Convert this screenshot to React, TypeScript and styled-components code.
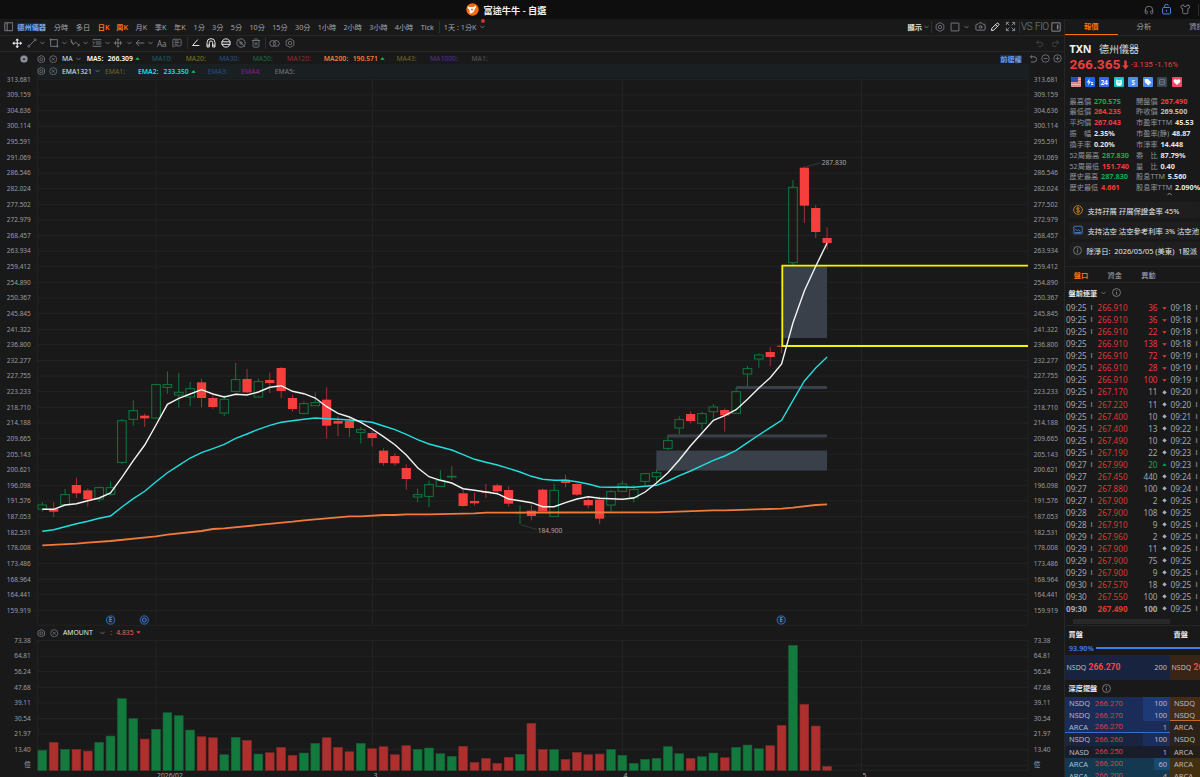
import React from "react";
import styled, { createGlobalStyle, css } from "styled-components";
import { Camera, Expand, Headphones, MessageSquareText, Redo2, Shirt, Trash2, Undo2 } from "lucide-react";

/* ---------- palette ---------- */
const C = {
  bg: "#191919",
  line: "#252525",
  text: "#a3a8b0",
  icon: "#6f747c",
  white: "#e4e6ea",
  red: "#f23c3c",
  green: "#0fae4e",
  orange: "#f5730f",
  cyan: "#22dfdf",
};

const Global = createGlobalStyle`
  html, body { margin: 0; padding: 0; background: ${C.bg}; }
  * { box-sizing: border-box; }
  body {
    font-family: "Noto Sans", "Noto Sans CJK TC", sans-serif;
    font-size: 7.2px;
    color: ${C.text};
    overflow: hidden;
  }
  svg { display: block; flex: none; }
`;

/* ---------- shell ---------- */
const Window = styled.div`
  width: 1200px;
  height: 777px;
  display: flex;
  flex-direction: column;
  overflow: hidden;
  background: ${C.bg};
  white-space: nowrap;
`;
const TitleBar = styled.header`
  flex: 0 0 19px;
  display: flex;
  align-items: center;
  background: #0e0e0e;
  padding-left: 466px;
`;
const Title = styled.div`
  width: 660px;
  padding-left: 4.5px;
  color: #f0f0f0;
  font-size: 9.2px;
  font-weight: 600;
`;
const TitleIcons = styled.div`
  display: flex;
  align-items: center;
  gap: 7.5px;
  margin-left: 4.5px;
`;
const Body = styled.div`
  flex: 1;
  min-height: 0;
  display: flex;
`;
const ChartSide = styled.main`
  flex: 0 0 1064px;
  display: flex;
  flex-direction: column;
  min-height: 0;
  overflow: hidden;
`;
const Bar = styled.div<{ $h: number; $line?: boolean }>`
  flex: 0 0 ${(p) => p.$h}px;
  display: flex;
  align-items: center;
  ${(p) => p.$line && css`border-bottom: 1px solid ${C.line};`}
`;
const Cell = styled.span<{ $w: number; $color?: string; $bold?: boolean; $center?: boolean }>`
  flex: 0 0 ${(p) => p.$w}px;
  width: ${(p) => p.$w}px;
  display: flex;
  align-items: center;
  justify-content: ${(p) => (p.$center ? "center" : "flex-start")};
  color: ${(p) => p.$color ?? C.text};
  font-weight: ${(p) => (p.$bold ? 600 : 400)};
`;
const Divider = styled.i`
  width: 1px;
  height: 12px;
  background: #2d2d2d;
`;
const Spacer = styled.div`
  flex: 1;
`;
const CompareText = styled.span<{ $w: number }>`
  flex: 0 0 ${(p) => p.$w}px;
  font-family: Roboto, sans-serif;
  font-weight: 300;
  font-size: 10px;
  letter-spacing: -0.5px;
  color: #7f838a;
`;
const DotWrap = styled.span`
  position: relative;
  display: flex;
`;
const RedDot = styled.i`
  position: absolute;
  left: 1px;
  top: -5.5px;
  width: 4px;
  height: 4px;
  border-radius: 50%;
  background: #c8342f;
`;

/* ---------- icons ---------- */
type G = { c?: string; s?: number; w?: number };
const Svg = ({ c = C.icon, s = 10, w = 1, children }: G & { children: React.ReactNode }) => (
  <svg width={s} height={s} viewBox="0 0 12 12" fill="none" stroke={c} strokeWidth={w * (12 / s)} strokeLinejoin="round">
    {children}
  </svg>
);
const Chevron = ({ c = C.icon }: G) => (
  <svg width="5" height="4" viewBox="0 0 5 4" fill="none" stroke={c} strokeWidth="0.9">
    <path d="M0.4 0.8 L2.5 3 L4.6 0.8" />
  </svg>
);
const HexGear = (p: G) => (
  <Svg w={0.9} {...p}>
    <path d="M6 0.7 L10.6 3.3 V8.7 L6 11.3 L1.4 8.7 V3.3 Z" />
    <circle cx="6" cy="6" r="2" />
  </Svg>
);
const CircleX = (p: G) => (
  <Svg w={0.8} {...p}>
    <circle cx="6" cy="6" r="5" />
    <path d="M4 4 L8 8 M8 4 L4 8" />
  </Svg>
);
const CirclePM = ({ plus, ...p }: G & { plus?: boolean }) => (
  <Svg w={0.9} {...p}>
    <circle cx="6" cy="6" r="5" />
    <path d={plus ? "M3.5 6 H8.5 M6 3.5 V8.5" : "M3.5 6 H8.5"} />
  </Svg>
);
const Info = () => (
  <Svg s={9} w={0.8} c="#868b93">
    <circle cx="6" cy="6" r="5.3" />
    <path d="M6 5 V9 M6 2.8 V4" />
  </Svg>
);
const PanelIcon = ({ right, ...p }: G & { right?: boolean }) => (
  <Svg w={0.9} {...p}>
    <rect x="1" y="1" width="10" height="10" />
    {right ? <rect x="7.5" y="3.4" width="1" height="5.2" fill={p.c} strokeWidth="0.6" /> : <path d="M4 1 V11" />}
  </Svg>
);
const Tri = ({ dir, c }: { dir: "up" | "down" | "flat"; c: string }) => (
  <svg width="5" height="5" viewBox="0 0 5 5" fill={c}>
    {dir === "up" && <path d="M0.3 3.8 L2.5 1.3 L4.7 3.8 Z" />}
    {dir === "down" && <path d="M0.3 1.3 L2.5 3.7 L4.7 1.3 Z" />}
    {dir === "flat" && <path d="M2.5 0.2 L4.7 2.4 L2.5 4.6 L0.3 2.4 Z" />}
  </svg>
);
const Logo = () => (
  <svg width="13" height="13" viewBox="0 0 13 13">
    <circle cx="6.5" cy="6.5" r="6.2" fill="#f9690e" />
    <path d="M1.6 3.2 C3 4.4 4.5 3.6 6.4 4 C8.2 4.4 8.8 3.2 9.8 2.6 C10.2 4.6 9.6 5.8 8.6 6.6 C8 9 6.8 10.6 4 10.4 C2.8 9.6 4 8.4 3.6 7 C2.4 6 1.4 5 1.6 3.2 Z" fill="#fff" />
    <circle cx="6" cy="6.6" r="1" fill="#f9690e" />
  </svg>
);
const Lock = () => (
  <Svg c="#4f86dc" s={11} w={1}>
    <rect x="1.8" y="3.8" width="8.6" height="7" rx="1" />
    <path d="M4 3.6 V2.6 a2 2 0 0 1 4 -0.6 M6 6.4 V8.4" />
  </Svg>
);

/* ---------- period row ---------- */
const periods: [string, number, string?][] = [
  ["分時", 22], ["多日", 22], ["日K", 18.5, C.orange], ["周K", 19.2, C.orange], ["月K", 19.3], ["季K", 19.3],
  ["年K", 19.5], ["1分", 18.5], ["3分", 18.7], ["5分", 18.7], ["10分", 22.8], ["15分", 22.8], ["30分", 22.7],
  ["1小時", 25.7], ["2小時", 25.9], ["3小時", 25.5], ["4小時", 26], ["Tick", 18.5],
];
const StockName = styled.b`
  color: #7ba6ee;
  font-weight: 600;
  background: #1d2a42;
  line-height: 8px;
`;

const PeriodBar = () => (
  <Bar $h={16.5} $line>
    <Cell $w={17.3} $center><PanelIcon c="#858a92" s={9.5} /></Cell>
    <Cell $w={36.5}><StockName>德州儀器</StockName></Cell>
    {periods.map(([t, w, c]) => (
      <Cell key={t} $w={w} $color={c} $bold={!!c}>{t}</Cell>
    ))}
    <Cell $w={4.5}><Divider /></Cell>
    <Cell $w={36.5}>1天 : 1分K</Cell>
    <DotWrap><Chevron /><RedDot /></DotWrap>
    <Spacer />
    <Cell $w={16.5} $color={C.white} $bold>顯示</Cell>
    <Cell $w={7}><Chevron /></Cell>
    <Cell $w={3}><Divider /></Cell>
    <Cell $w={11} $center><HexGear /></Cell>
    <Cell $w={19} $center><Svg s={10}><rect x="1.3" y="1.3" width="9.4" height="9.4" /></Svg></Cell>
    <Cell $w={9}><Chevron /></Cell>
    <Cell $w={14} $center><Camera size={11} color="#858a92" strokeWidth={1.9} /></Cell>
    <Cell $w={15.5} $center>
      <Svg c="#e8eaee" s={10} w={1}>
        <path d="M1.8 10.2 L2.2 7.6 L8 1.8 a1.5 1.5 0 0 1 2.2 2.2 L4.4 9.8 Z M6.6 3.2 L8.8 5.4" />
      </Svg>
    </Cell>
    <Cell $w={16.5} $center><Expand size={11} color="#858a92" strokeWidth={2} /></Cell>
    <Cell $w={2}><Divider /></Cell>
    <CompareText $w={14}>VS</CompareText>
    <CompareText $w={14}>FIO</CompareText>
    <Cell $w={13.5} $center><PanelIcon right c="#8e929a" s={10} /></Cell>
    <Cell $w={1.5} />
  </Bar>
);

/* ---------- drawing tools row ---------- */
const drawTools: React.ReactNode[] = [
  <Svg><circle cx="2.2" cy="9.8" r="1.2" /><circle cx="9.8" cy="2.2" r="1.2" /><path d="M3 9 L9 3" /></Svg>,
  <Svg><rect x="2" y="2" width="8" height="8" /><path d="M0.6 2 H3.4 M2 0.6 V3.4 M8.6 10 H11.4 M10 8.6 V11.4" /></Svg>,
  <Svg><path d="M1 1.5 L3.6 7.8 L7 5 L11 9 M1 4 L3.6 7.8 M9.2 9.8 L11 9 L10.8 7" /></Svg>,
  <Svg><path d="M0.8 2 H11.2 M4.5 4.8 H11.2 M4.5 7.2 H11.2 M0.8 10 H11.2 M0.8 4 L2.8 6 L0.8 8" /></Svg>,
  <Svg><path d="M6 0.8 V11.2 M0.8 6 H11.2 M3 3.8 V8.2 M9 3.8 V8.2 M4.4 2 H7.6 M4.4 10 H7.6" /></Svg>,
  <Svg><path d="M11.2 6 H1.4 M5 2.4 L1.4 6 L5 9.6" /></Svg>,
];
const ToolText = styled.span`
  font-size: 8px;
  color: #858a92;
`;
const DrawBar = () => (
  <Bar $h={16} $line>
    <Cell $w={10} />
    <Cell $w={14} $center>
      <Svg c="#eceef2" s={10.5} w={1.1}>
        <path d="M6 1 V11 M1 6 H11" />
        <path d="M4.4 2.6 L6 0.8 L7.6 2.6 Z M4.4 9.4 L6 11.2 L7.6 9.4 Z M2.6 4.4 L0.8 6 L2.6 7.6 Z M9.4 4.4 L11.2 6 L9.4 7.6 Z" fill="#eceef2" strokeWidth="0.5" />
      </Svg>
    </Cell>
    <Cell $w={1.5} />
    {drawTools.map((node, i) => (
      <React.Fragment key={i}>
        <Cell $w={12.9} $center>{node}</Cell>
        <Cell $w={8.7} $center><Chevron /></Cell>
      </React.Fragment>
    ))}
    <Cell $w={13.6} $center><ToolText>Aa</ToolText></Cell>
    <Cell $w={17} $center><MessageSquareText size={10} color={C.icon} strokeWidth={2.2} /></Cell>
    <Cell $w={3.5} $center><Divider /></Cell>
    <Cell $w={14} $center><Svg c="#e4e6ea" s={9.5} w={1}><path d="M8.5 2 L2 9.5 H10.5" /></Svg></Cell>
    <Cell $w={15.5} $center><Svg c="#e4e6ea" s={10} w={1}><path d="M1.2 10.8 V5.5 a4.8 4.8 0 0 1 9.6 0 V10.8 H8 V5.6 a2 2 0 0 0 -4 0 V10.8 Z M1.2 8.6 H4 M8 8.6 H10.8" /></Svg></Cell>
    <Cell $w={15} $center><Svg c="#e4e6ea" s={10} w={1}><circle cx="6" cy="6" r="5" /><path d="M0.8 4.6 H11.2 M0.8 7.6 H11.2" /></Svg></Cell>
    <Cell $w={15} $center><Svg s={10}><circle cx="6" cy="6" r="5" /><circle cx="6" cy="6" r="1.4" /><path d="M2 1.5 L10.5 10.5" /></Svg></Cell>
    <Cell $w={15} $center><Trash2 size={10} color={C.icon} strokeWidth={2.2} /></Cell>
    <Cell $w={4} $center><Divider /></Cell>
    <Cell $w={14.5} $center><Svg s={11}><circle cx="4" cy="6" r="3.2" /><circle cx="8" cy="6" r="3.2" /></Svg></Cell>
    <Cell $w={15} $center><HexGear /></Cell>
    <Spacer />
    <Cell $w={15.5} $center><Undo2 size={9} color="#4a4e54" strokeWidth={2} /></Cell>
    <Cell $w={17} $center><Redo2 size={9} color="#4a4e54" strokeWidth={2} /></Cell>
  </Bar>
);

/* ---------- indicator legends ---------- */
const Legend = styled(Bar)<{ $top?: number }>`
  padding-top: ${(p) => p.$top ?? 0}px;
  font-size: 6.8px;
`;
const EmaLegend = styled.div`
  position: absolute;
  left: 0;
  right: 0;
  top: 0;
  height: 14px;
  display: flex;
  align-items: center;
  background: #1a1f21;
  font-size: 6.8px;
`;
const AdjustTag = styled.b`
  font-size: 7.2px;
  font-weight: 600;
  line-height: 8px;
  color: #6f9ce8;
  background: #1d2a42;
`;
const MaLegend = () => (
  <Legend $h={12.5} $top={2}>
    <Cell $w={35}>
      <Cell $w={19.5} />
      <Svg s={8} c="#8b9098" w={0.2}><circle cx="6" cy="6" r="5.4" fill="#8b9098" /><path d="M3.4 7.6 L6 4 L8.6 7.6 Z" fill="#222" /></Svg>
    </Cell>
    <Cell $w={12} $center><HexGear s={8.5} /></Cell>
    <Cell $w={12} $center><CircleX s={8.5} /></Cell>
    <Cell $w={3} />
    <Cell $w={14} $color={C.white}>MA</Cell>
    <Cell $w={10.7}><Chevron /></Cell>
    <Cell $w={21} $color="#fff" $bold>MA5:</Cell>
    <Cell $w={27.3} $color="#fff" $bold>266.309</Cell>
    <Cell $w={17}><Tri dir="up" c="#18c45c" /></Cell>
    <Cell $w={33.7} $color="#17606f">MA10:</Cell>
    <Cell $w={33.5} $color="#7c7c16">MA20:</Cell>
    <Cell $w={33.5} $color="#22508a">MA30:</Cell>
    <Cell $w={34.3} $color="#1c6b40">MA50:</Cell>
    <Cell $w={36.7} $color="#883030">MA120:</Cell>
    <Cell $w={29} $color="#f57a3c" $bold>MA200:</Cell>
    <Cell $w={27} $color="#f57a3c" $bold>190.571</Cell>
    <Cell $w={16.8}><Tri dir="up" c="#18c45c" /></Cell>
    <Cell $w={33.5} $color="#74661f">MA43:</Cell>
    <Cell $w={41.5} $color="#573089">MA1000:</Cell>
    <Cell $w={20} $color="#5a5a5a">MA1:</Cell>
    <Spacer />
    <AdjustTag>前復權</AdjustTag>
    <Cell $w={6} />
    <Cell $w={11.5} $center>
      <Svg s={8.5}><path d="M2 2.5 H7 a3.6 3.6 0 0 1 0 7.4 H2.6 M4.4 0.6 L2 2.6 L4.4 4.8" /></Svg>
    </Cell>
    <Cell $w={11.5} $center><CirclePM s={9} /></Cell>
    <Cell $w={13.2} $center><CirclePM plus s={9} /></Cell>
  </Legend>
);

/* ---------- chart data ---------- */
const STEP = 11.374;
const FIRST = 42.3;
const cx = (i: number) => FIRST + STEP * i;
const cy = (v: number) => 330 + v / 3;

// colour, high, body top, body bottom, low
type Candle = ["g" | "r", number, number, number, number];
const candles: Candle[] = [
  ["g", 516, 524, 538, 545], ["r", 516, 537, 545, 561], ["g", 477, 493, 525, 525], ["r", 443, 465, 490, 504],
  ["r", 475, 481, 508, 530], ["g", 470, 472, 508, 516], ["g", 454, 472, 494, 497], ["g", 267, 271, 398, 402],
  ["g", 211, 241, 269, 287], ["r", 251, 257, 265, 290], ["g", 162, 163, 265, 267], ["g", 124, 163, 173, 191],
  ["g", 129, 186, 196, 233], ["g", 156, 175, 202, 228], ["r", 146, 157, 204, 232], ["r", 196, 204, 231, 236],
  ["g", 195, 207, 250, 258], ["g", 99, 148, 185, 186], ["r", 117, 147, 187, 190], ["g", 146, 154, 202, 203],
  ["r", 128, 150, 159, 189], ["r", 111, 114, 183, 204], ["r", 194, 204, 237, 245], ["g", 214, 220, 251, 254],
  ["g", 187, 217, 228, 228], ["r", 172, 209, 287, 326], ["r", 259, 273, 281, 319], ["r", 263, 273, 294, 321],
  ["g", 291, 298, 308, 340], ["r", 303, 309, 324, 350], ["r", 355, 362, 399, 407], ["r", 369, 378, 400, 408],
  ["r", 403, 414, 447, 479], ["g", 476, 493, 502, 517], ["g", 452, 463, 500, 531], ["g", 421, 451, 470, 470],
  ["g", 408, 438, 442, 450], ["r", 480, 490, 528, 530], ["r", 488, 513, 520, 527], ["r", 462, 484, 488, 504],
  ["r", 461, 466, 484, 490], ["r", 469, 480, 521, 530], ["g", 527, 547, 549, 582], ["r", 524, 542, 558, 571],
  ["r", 476, 479, 544, 544], ["g", 461, 480, 560, 560], ["r", 434, 449, 459, 472], ["r", 460, 462, 494, 498],
  ["r", 504, 510, 526, 535], ["r", 500, 509, 566, 582], ["g", 479, 484, 526, 544], ["g", 452, 461, 485, 485],
  ["g", 465, 478, 504, 518], ["g", 429, 430, 455, 466], ["g", 419, 427, 441, 460], ["g", 316, 331, 356, 360],
  ["g", 259, 268, 295, 313], ["r", 244, 252, 273, 280], ["g", 245, 250, 281, 299], ["g", 222, 230, 246, 265],
  ["r", 235, 240, 256, 305], ["g", 173, 184, 251, 251], ["g", 108, 115, 133, 168], ["g", 70, 74, 88, 113],
  ["r", 51, 66, 81, 108], ["r", 45, 47, 50, 69], ["g", -450, -429, -201, -190], ["r", -490, -487, -373, -321],
  ["r", -375, -366, -294, -276], ["r", -308, -276, -261, -241],
];
const ma5 = [
  538, 538, 525, 521, 512, 504, 489, 442, 392, 345, 285, 223, 205, 192, 179, 192, 201, 193, 195, 186, 172, 167, 184,
  191, 204, 230, 250, 261, 277, 297, 320, 344, 375, 413, 440, 451, 459, 476, 481, 486, 491, 507, 512, 518, 530, 530,
  518, 507, 500, 505, 506, 508, 504, 486, 459, 428, 390, 347, 309, 271, 257, 239, 208, 174, 143, 102, -22, -118, -191,
  -261,
];
const ema2 = [
  604, 599, 590, 581, 574, 565, 558, 531, 506, 484, 455, 428, 406, 384, 368, 356, 343, 325, 312, 298, 286, 277, 272,
  268, 264, 266, 268, 270, 273, 277, 288, 299, 313, 329, 342, 351, 360, 374, 388, 397, 405, 415, 426, 439, 448, 451,
  451, 455, 462, 471, 472, 471, 472, 469, 466, 453, 437, 423, 407, 391, 378, 361, 338, 315, 293, 271, 211, 153, 114,
  81,
];
const ma200: [number, number][] = [
  [0, 646], [3, 641], [4, 638], [6, 633], [10, 619], [11, 614], [14, 603], [15, 597], [16, 595], [22, 575], [23, 571],
  [27, 559], [28, 559], [30, 555], [31, 555], [32, 553], [34, 553], [38, 550], [39, 548], [44, 547.5], [54, 547],
  [59, 541], [60, 541], [65, 536], [66, 533], [68, 525], [69, 523],
];
// top edge of every turnover bar, in thirds of a pixel below y = 600
const turnover = [
  450, 426, 447, 447, 452, 426, 407, 295, 355, 416, 387, 337, 346, 389, 409, 412, 463, 411, 420, 461, 457, 441, 465,
  458, 429, 412, 441, 454, 429, 445, 439, 463, 436, 447, 443, 460, 468, 438, 486, 474, 489, 471, 462, 369, 447, 448,
  477, 456, 463, 461, 447, 465, 489, 477, 474, 439, 460, 474, 469, 458, 472, 441, 434, 445, 436, 375, 135, 312, 377,
  498,
];
const turnoverColor = "grgrrggggrggggrrggrgrrrggrrrgrrrrggggrrrrrgrrgrrrrgggggggrggrgggrrgrrr";

const priceLabels = [
  "313.681", "309.159", "304.636", "300.114", "295.591", "291.069", "286.546", "282.024", "277.502", "272.979",
  "268.457", "263.934", "259.412", "254.890", "250.367", "245.845", "241.322", "236.800", "232.277", "227.755",
  "223.233", "218.710", "214.188", "209.665", "205.143", "200.621", "196.098", "191.576", "187.053", "182.531",
  "178.008", "173.486", "168.964", "164.441", "159.919",
];
const amountLabels = ["73.38", "64.81", "56.24", "47.68", "39.11", "30.54", "21.97", "13.40", "億"];
const months = [155.8, 372.5, 622.3, 861.5];

/* ---------- chart ---------- */
const Pane = styled.section<{ $h: number }>`
  flex: 0 0 ${(p) => p.$h}px;
  display: grid;
  grid-template-columns: 37px 991.5px 35.5px;
`;
const Plot = styled.div`
  position: relative;
`;
const Axis = styled.div<{ $side: "left" | "right"; $top: number; $row: number }>`
  margin-top: ${(p) => p.$top}px;
  display: flex;
  flex-direction: column;
  align-items: ${(p) => (p.$side === "left" ? "flex-end" : "flex-start")};
  padding: ${(p) => (p.$side === "left" ? "0 6.2px 0 0" : "0 0 0 5.3px")};
  font-size: 6.5px;
  color: #989ea8;
  span {
    flex: 0 0 ${(p) => p.$row}px;
    line-height: ${(p) => p.$row}px;
  }
`;
const DateAxis = styled.div`
  flex: 0 0 7px;
  margin-top: -0.5px;
  display: flex;
  overflow: hidden;
  font-size: 6.8px;
  line-height: 9.5px;
  padding-left: 157px;
`;

const Labels = ({ items, side, top, row }: { items: string[]; side: "left" | "right"; top: number; row: number }) => (
  <Axis $side={side} $top={top} $row={row}>
    {items.map((t) => <span key={t}>{t}</span>)}
  </Axis>
);

const path = (pts: [number, number][]) => pts.map(([i, v], n) => `${n ? "L" : "M"}${cx(i).toFixed(1)} ${cy(v).toFixed(1)}`).join("");

const Badge = ({ x, letter }: { x: number; letter: string }) => (
  <g>
    <circle cx={x} cy={620} r={4.1} fill="#15243c" stroke="#3d70bb" strokeWidth={0.9} />
    {letter ? (
      <text x={x} y={622.3} fontSize={6.2} fontWeight={600} textAnchor="middle" fill="#5a92e2">{letter}</text>
    ) : (
      <circle cx={x} cy={620} r={1.9} fill="none" stroke="#5088d8" strokeWidth={0.9} />
    )}
  </g>
);

const PricePlot = () => (
  <svg width="991.5" height="561.5" viewBox="37 64 991.5 561.5">
    <g stroke="#222324" strokeWidth="1" fill="none">
      {priceLabels.map((t, i) => <path key={t} d={`M37 ${79.3 + 15.62 * i}H1028`} />)}
      {months.map((x) => <path key={x} d={`M${x} 64V625`} />)}
      <path d="M37.3 64V625.2H1028V64" />
    </g>
    <g fill="#3a4049">
      <rect x="782.5" y="266" width="44.5" height="72" />
      <rect x="656.3" y="450.6" width="170.7" height="20" />
      <rect x="667.6" y="434.4" width="159.4" height="3" />
      <rect x="736.3" y="386" width="90.7" height="3" />
    </g>
    {candles.map(([k, hi, top, bot, lo], i) => {
      const x = cx(i);
      return k === "r" ? (
        <g key={i}>
          <path d={`M${x} ${cy(hi)}V${cy(lo)}`} stroke="#b53232" strokeWidth="0.9" />
          <rect x={x - 4.6} y={cy(top)} width="9.2" height={Math.max(1, (bot - top) / 3)} fill="#f63e3c" />
        </g>
      ) : (
        <g key={i} stroke="#0d7a3c" strokeWidth="1" fill="none">
          <path d={`M${x} ${cy(hi)}V${cy(top)}M${x} ${cy(bot)}V${cy(lo)}`} />
          <rect x={x - 4.3} y={cy(top) + 0.3} width="8.6" height={Math.max(0.3, (bot - top) / 3 - 0.6)} />
        </g>
      );
    })}
    <path d="M1028 265.6H782.3V346H1028" fill="none" stroke="#f7f300" strokeWidth="1.8" />
    <path d={path(ma200)} fill="none" stroke="#ef7a3a" strokeWidth="1.8" />
    <path d={path(ema2.map((v, i) => [i, v]))} fill="none" stroke={C.cyan} strokeWidth="1.4" />
    <path d={path(ma5.map((v, i) => [i, v]))} fill="none" stroke="#f4f4f4" strokeWidth="1.4" />
    <path d="M806 166.6L821 162.8M521 524.8L537 529.6" stroke="#3b3e42" strokeWidth="0.8" />
    <g fontSize="6.6" fill="#a3a8b0">
      <text x="821.8" y="164.7">287.830</text>
      <text x="537.8" y="532.6">184.900</text>
    </g>
    <Badge x={110.6} letter="E" />
    <Badge x={144.3} letter="" />
    <Badge x={781.2} letter="E" />
  </svg>
);

const AmountPlot = () => (
  <svg width="991.5" height="131" viewBox="37 640 991.5 131">
    <g stroke="#222324" strokeWidth="1" fill="none">
      {amountLabels.map((t, i) => <path key={t} d={`M37 ${640.6 + 15.58 * i}H1028`} />)}
      {months.map((x) => <path key={x} d={`M${x} 640V771`} />)}
      <path d="M37.3 640V770.6H1028V640" />
    </g>
    {turnover.map((t, i) => (
      <rect
        key={i}
        x={cx(i) - 4.4}
        y={600.4 + t / 3}
        width="8.8"
        height={170 - t / 3}
        fill={turnoverColor[i] === "g" ? "#137a3d" : "#ae302e"}
        stroke={turnoverColor[i] === "g" ? "#17603a" : "#842a29"}
        strokeWidth="0.6"
      />
    ))}
  </svg>
);

const ChartArea = () => (
  <>
    <Pane $h={561.5}>
      <Labels items={priceLabels} side="left" top={7.5} row={15.62} />
      <Plot>
        <PricePlot />
        <EmaLegend>
          <Cell $w={8.5} $center><HexGear s={8.5} /></Cell>
          <Cell $w={3.5} />
          <Cell $w={8.5} $center><CircleX s={8.5} /></Cell>
          <Cell $w={4.5} />
          <Cell $w={33} $color={C.white}>EMA1321</Cell>
          <Cell $w={10}><Chevron /></Cell>
          <Cell $w={33} $color="#79642a">EMA1:</Cell>
          <Cell $w={25.5} $color={C.cyan} $bold>EMA2:</Cell>
          <Cell $w={27.5} $color={C.cyan} $bold>233.350</Cell>
          <Cell $w={16.5}><Tri dir="up" c="#18c45c" /></Cell>
          <Cell $w={33.5} $color="#22508a">EMA3:</Cell>
          <Cell $w={33.8} $color="#861c8a">EMA4:</Cell>
          <Cell $w={30} $color="#77797c">EMA5:</Cell>
        </EmaLegend>
      </Plot>
      <Labels items={priceLabels} side="right" top={7.5} row={15.62} />
    </Pane>
    <Legend $h={14.5}>
      <Cell $w={35} />
      <Cell $w={12.5} $center><HexGear s={8.5} /></Cell>
      <Cell $w={13.5} $center><CircleX s={8.5} /></Cell>
      <Cell $w={2} />
      <Cell $w={37} $color={C.white}>AMOUNT</Cell>
      <Cell $w={10}><Chevron /></Cell>
      <Cell $w={6.2} $color="#e04a4a">:</Cell>
      <Cell $w={19.5} $color="#e86060">4.835</Cell>
      <Cell $w={6}><Tri dir="down" c={C.red} /></Cell>
    </Legend>
    <Pane $h={131}>
      <Labels items={amountLabels} side="left" top={-7.2} row={15.58} />
      <Plot><AmountPlot /></Plot>
      <Labels items={amountLabels} side="right" top={-7.2} row={15.58} />
    </Pane>
    <DateAxis>
      <Cell $w={216.5}>2026/02</Cell>
      <Cell $w={250}>3</Cell>
      <Cell $w={239}>4</Cell>
      <Cell $w={10}>5</Cell>
    </DateAxis>
  </>
);

/* ---------- quote panel ---------- */
const Panel = styled.aside`
  flex: 0 0 136px;
  border-left: 1px solid #262626;
  overflow: hidden;
  display: flex;
  flex-direction: column;
`;
const Tabs = styled.div`
  flex: 0 0 16.5px;
  display: flex;
  border-bottom: 1px solid ${C.line};
`;
const Tab = styled.div<{ $on?: boolean }>`
  flex: 0 0 52.6px;
  display: flex;
  align-items: center;
  justify-content: center;
  color: ${(p) => (p.$on ? C.orange : C.text)};
  font-weight: ${(p) => (p.$on ? 700 : 400)};
  border-bottom: 1px solid ${(p) => (p.$on ? C.orange : "transparent")};
  font-size: 7.3px;
`;
const Name = styled.div`
  flex: 0 0 22.3px;
  padding: 4.8px 0 0 4.5px;
  display: flex;
  align-items: center;
  gap: 7.5px;
  font-size: 10px;
  line-height: 14px;
  color: #d7dade;
  b { font-size: 10.7px; color: #f0f1f3; }
`;
const Price = styled.div`
  flex: 0 0 17.4px;
  display: flex;
  align-items: center;
  padding: 0 0 3px 4.5px;
  font-family: Roboto, sans-serif;
  font-size: 7.9px;
  line-height: 11px;
  color: ${C.red};
  b { font-size: 13.6px; }
  svg { margin: 0 2px 0 1.5px; }
`;
const Badges = styled.div`
  flex: 0 0 10px;
  display: flex;
  gap: 4.45px;
  padding-left: 5.5px;
  margin-top: 2px;
`;
const Chip = styled.span<{ $bg: string }>`
  flex: 0 0 10px;
  height: 10px;
  display: flex;
  align-items: center;
  justify-content: center;
  border-radius: 1px;
  background: ${(p) => p.$bg};
  color: #fff;
  font-size: 6.2px;
  font-weight: 700;
  overflow: hidden;
`;
const Stats = styled.div`
  flex: 0 0 97.5px;
  margin: 8px 0 0 4.5px;
  display: grid;
  grid-template-columns: 66.5px 80px;
  grid-auto-rows: 10.83px;
  align-items: center;
`;
const Stat = styled.div<{ $c?: string }>`
  display: flex;
  align-items: center;
  gap: 2.8px;
  height: 10.83px;
  color: #8f959e;
  b { font-size: 7.25px; color: ${(p) => p.$c ?? C.white}; }
`;
const Collapse = styled.div`
  flex: 0 0 5.5px;
  margin-top: -0.5px;
  padding-left: 102px;
  svg { transform: rotate(180deg); }
`;
const Notes = styled.div`
  flex: 0 0 57.5px;
  margin: 4.2px 0 0 4.5px;
  display: flex;
  flex-direction: column;
  gap: 3.8px;
`;
const Note = styled.div`
  flex: 0 0 16.5px;
  display: flex;
  align-items: center;
  gap: 5px;
  padding-left: 3px;
  background: #1e1e1e;
  border-radius: 2px;
  color: ${C.white};
  font-size: 7.35px;
`;
const SubTabs = styled.div`
  flex: 0 0 17.5px;
  margin-top: 6.5px;
  border-top: 1px solid ${C.line};
  border-bottom: 1px solid ${C.line};
  display: flex;
  align-items: center;
  padding-left: 8.7px;
`;
const Heading = styled.div<{ $h: number }>`
  flex: 0 0 ${(p) => p.$h}px;
  display: flex;
  align-items: center;
  padding-left: 3.5px;
  color: ${C.white};
  font-weight: 600;
`;
const Tick = styled.div<{ $bold?: boolean }>`
  flex: 0 0 12.016px;
  display: grid;
  grid-template-columns: 24.5px 7px 32px 28px 13px 25px 6px;
  align-items: center;
  padding-left: 1px;
  font-size: 8.15px;
  line-height: 12px;
  color: #a0a6b0;
  font-weight: ${(p) => (p.$bold ? 700 : 400)};
`;
const Plain = styled.span`
  font-weight: 400;
`;
const Sep = styled.span`
  font-family: "Liberation Sans", sans-serif;
  font-size: 7.5px;
  font-weight: 400;
`;
const TickPrice = styled.span`
  color: #de3838;
`;
const Qty = styled.span<{ $c?: string }>`
  text-align: right;
  color: ${(p) => p.$c ?? "#a0a6b0"};
`;
const Mark = styled.span`
  display: flex;
  justify-content: center;
`;
const ScrollTrack = styled.div`
  flex: 0 0 10.8px;
  padding: 3.8px 0 0 8px;
  border-bottom: 1px solid ${C.line};
  i { display: block; width: 97px; height: 5px; background: #282828; }
`;
const Ratio = styled.div`
  flex: 0 0 13.5px;
  display: flex;
  align-items: center;
  gap: 2.5px;
  padding-left: 4px;
  color: #3c84f2;
  font-weight: 600;
  i { flex: 1; height: 2px; background: #3580f3; }
`;
const Quote = styled.div`
  flex: 0 0 24.5px;
  display: grid;
  grid-template-columns: 105px 60px;
`;
const QuoteSide = styled.div<{ $bg: string }>`
  background: ${(p) => p.$bg};
  display: flex;
  align-items: center;
  padding: 0 3px 0 1.5px;
  gap: 2.3px;
  font-size: 7px;
  color: #b9bec8;
  b { font-family: Roboto, sans-serif; font-size: 8.5px; color: #ff4444; }
  span:last-child { margin-left: auto; font-size: 7.4px; }
`;
const BookRow = styled.div<{ $bid: string; $ask: string; $bidLine?: boolean; $askLine?: boolean }>`
  flex: 0 0 12.04px;
  display: grid;
  grid-template-columns: 105px 60px;
  font-size: 7.5px;
  color: #b4bac5;
  > :first-child {
    background: ${(p) => p.$bid};
    border-bottom: ${(p) => (p.$bidLine ? "1px solid #3a6cd0" : "0")};
  }
  > :last-child {
    background: ${(p) => p.$ask};
    border-bottom: ${(p) => (p.$askLine ? "1px solid #c96a20" : "0")};
  }
`;
const BookSide = styled.div`
  display: flex;
  align-items: center;
  padding-left: 4px;
`;
const BookPrice = styled.span`
  flex: 1;
  font-family: Roboto, sans-serif;
  font-size: 7.75px;
  line-height: 10px;
  padding-top: 1px;
  color: #d0424c;
`;
const BookQty = styled.span<{ $w: number; $bg: string }>`
  width: ${(p) => p.$w}px;
  align-self: stretch;
  display: flex;
  align-items: center;
  justify-content: flex-end;
  padding-right: 3px;
  background: ${(p) => p.$bg};
`;

const stats: [string, string, string?][] = [
  ["最高價", "270.575", C.green], ["開盤價", "267.490", C.red],
  ["最低價", "264.235", C.red], ["昨收價", "269.500", "#bcc0c7"],
  ["平均價", "267.043", C.red], ["市盈率TTM", "45.53"],
  ["振　幅", "2.35%"], ["市盈率(静)", "48.87"],
  ["換手率", "0.20%"], ["市淨率", "14.448"],
  ["52周最高", "287.830", C.green], ["委　比", "87.79%"],
  ["52周最低", "151.740", C.red], ["量　比", "0.40"],
  ["歷史最高", "287.830", C.green], ["股息TTM", "5.560"],
  ["歷史最低", "4.661", C.red], ["股息率TTM", "2.090%"],
];

// time, flag, price, size, direction, second column time, flag
type TickRow = [string, string, string, string, "up" | "down" | "flat", string, string];
const ticks: TickRow[] = [
  ["09:25", "I", "266.910", "36", "down", "09:18", "I"],
  ["09:25", "I", "266.910", "36", "down", "09:18", "I"],
  ["09:25", "I", "266.910", "22", "down", "09:18", "I"],
  ["09:25", "", "266.910", "138", "down", "09:18", "I"],
  ["09:25", "I", "266.910", "72", "down", "09:19", "I"],
  ["09:25", "I", "266.910", "28", "down", "09:19", "I"],
  ["09:25", "", "266.910", "100", "down", "09:19", "I"],
  ["09:25", "I", "267.170", "11", "flat", "09:20", "I"],
  ["09:25", "I", "267.220", "11", "flat", "09:20", "I"],
  ["09:25", "I", "267.400", "10", "flat", "09:21", "I"],
  ["09:25", "I", "267.400", "13", "flat", "09:22", "I"],
  ["09:25", "I", "267.490", "10", "flat", "09:22", "I"],
  ["09:25", "I", "267.190", "22", "flat", "09:23", "I"],
  ["09:27", "I", "267.990", "20", "up", "09:23", "I"],
  ["09:27", "", "267.450", "440", "flat", "09:24", "I"],
  ["09:27", "", "267.880", "100", "flat", "09:24", "I"],
  ["09:27", "I", "267.900", "2", "flat", "09:25", "I"],
  ["09:28", "", "267.900", "108", "flat", "09:25", ""],
  ["09:28", "I", "267.910", "9", "flat", "09:25", "I"],
  ["09:29", "I", "267.960", "2", "flat", "09:25", "I"],
  ["09:29", "I", "267.900", "11", "flat", "09:25", "I"],
  ["09:29", "I", "267.900", "75", "flat", "09:25", ""],
  ["09:29", "I", "267.900", "9", "flat", "09:25", "I"],
  ["09:30", "I", "267.570", "18", "flat", "09:25", "I"],
  ["09:30", "", "267.550", "100", "flat", "09:25", "I"],
  ["09:30", "", "267.490", "100", "flat", "09:25", "I"],
];
const dirColor = { up: C.green, down: "#e83c3c", flat: "#a9afb8" };

type Level = { ex: string; p: string; q: string; bid: string; qw: number; qbg: string; askEx: string; ask: string; bl?: boolean; al?: boolean };
const book: Level[] = [
  { ex: "NSDQ", p: "266.270", q: "100", bid: "#1a2c57", qw: 27, qbg: "#1d3a76", askEx: "NSDQ", ask: "#472c13" },
  { ex: "NSDQ", p: "266.270", q: "100", bid: "#1a2c57", qw: 27, qbg: "#1d3a76", askEx: "NSDQ", ask: "#472c13", al: true },
  { ex: "ARCA", p: "266.270", q: "1", bid: "#1a2c57", qw: 8, qbg: "transparent", askEx: "ARCA", ask: "#2e2116", bl: true },
  { ex: "NSDQ", p: "266.260", q: "100", bid: "#1a2440", qw: 27, qbg: "#1b2e5a", askEx: "NSDQ", ask: "#2e2116" },
  { ex: "NASD", p: "266.250", q: "1", bid: "#191c29", qw: 8, qbg: "transparent", askEx: "ARCA", ask: "#241e18" },
  { ex: "ARCA", p: "266.200", q: "60", bid: "#133850", qw: 16.5, qbg: "#174a70", askEx: "ARCA", ask: "#42300f" },
  { ex: "ARCA", p: "266.200", q: "4", bid: "#133850", qw: 8, qbg: "transparent", askEx: "ARCA", ask: "#42300f" },
];

const White = ({ d }: { d: string }) => (
  <svg width="8" height="8" viewBox="0 0 8 8"><path d={d} fill="#fff" /></svg>
);

const QuotePanel = () => (
  <Panel>
    <Tabs><Tab $on>報價</Tab><Tab>分析</Tab><Tab>資訊</Tab></Tabs>
    <Name><b>TXN</b>德州儀器</Name>
    <Price>
      <b>266.365</b>
      <svg width="7" height="10" viewBox="0 0 7 10"><path d="M2.3 0.5 H4.7 V5.4 H6.8 L3.5 9.5 L0.2 5.4 H2.3 Z" fill={C.red} /></svg>
      -3.135 -1.16%
    </Price>
    <Badges>
      <Chip $bg="#e8b9b4">
        <svg width="10" height="10" viewBox="0 0 10 10">
          <path d="M0 1 H10 M0 3.6 H10 M0 6.2 H10 M0 8.8 H10" stroke="#e0706a" strokeWidth="1.3" />
          <rect width="7" height="5" fill="#2d4fa8" />
        </svg>
      </Chip>
      <Chip $bg="#1268ee"><White d="M3.6 0.4 L0.8 4.4 H2.8 L2 7.4 L5 3.4 H3.2 Z M5 4 H7.4 L6 6 H7.4 V7 H4.8 L6 4.9 H5 Z" /></Chip>
      <Chip $bg="#3a66ee">24</Chip>
      <Chip $bg="#10c6cc"><White d="M1.4 1.2 L3 2.2 H5 L6.6 1.2 L7 5 A3 3 0 0 1 1 5 Z M2.4 3.6 V4.4 H5.6 V3.6 Z" /></Chip>
      <Chip $bg="#4b8ef3">S</Chip>
      <Chip $bg="#4a90f5"><White d="M0.8 1 H4 L7.4 4.4 L4.4 7.4 L0.8 4 Z" /></Chip>
      <Chip $bg="#3d4550"><svg width="8" height="8" viewBox="0 0 8 8"><path d="M1.5 1.5 H6.5 V6.5 H1.5 Z M1.5 4 H6.5" stroke="#69727e" fill="none" /></svg></Chip>
      <Chip $bg="#fb4763"><White d="M4 7 L1 4.2 A1.7 1.7 0 0 1 4 2 A1.7 1.7 0 0 1 7 4.2 Z" /></Chip>
    </Badges>
    <Stats>
      {stats.map(([k, v, c]) => <Stat key={k} $c={c}>{k}<b>{v}</b></Stat>)}
    </Stats>
    <Collapse><Chevron c="#9da2aa" /></Collapse>
    <Notes>
      <Note>
        <Svg c="#c98722" s={10} w={0.9}><circle cx="6" cy="6" r="5.2" /><path d="M8 4.3 C7.4 3 4.2 3 4.2 4.6 C4.2 6.4 8 5.6 8 7.4 C8 9 4.6 9 4 7.6 M6 2.2 V9.8" /></Svg>
        支持孖展 孖展保證金率 45%
      </Note>
      <Note>
        <Svg c="#4a80cf" s={10} w={0.9}><rect x="1" y="1.5" width="10" height="9" rx="0.5" /><path d="M2.5 4.5 L5 7 L6.5 5.5 L9 8 M2.5 9 H9.5" /></Svg>
        支持沽空 沽空參考利率 3% 沽空池
      </Note>
      <Note><Info />除淨日:&nbsp; 2026/05/05 (美東)&nbsp; 1股派
      </Note>
    </Notes>
    <SubTabs>
      <Cell $w={33.8} $color={C.orange} $bold>盤口</Cell>
      <Cell $w={33.8}>資金</Cell>
      <Cell $w={20}>異動</Cell>
    </SubTabs>
    <Heading $h={19}>
      <Cell $w={32.3} $color={C.white} $bold>盤前逐筆</Cell>
      <Cell $w={11}><Chevron /></Cell>
      <Info />
    </Heading>
    {ticks.map(([t, f, p, q, d, t2, f2], i) => (
      <Tick key={i} $bold={i === ticks.length - 1}>
        <span>{t}</span>
        <Sep>{f}</Sep>
        <TickPrice>{p}</TickPrice>
        <Qty $c={d === "flat" ? undefined : dirColor[d]}>{q}</Qty>
        <Mark><Tri dir={d} c={dirColor[d]} /></Mark>
        <Plain>{t2}</Plain>
        <Sep>{f2}</Sep>
      </Tick>
    ))}
    <ScrollTrack><i /></ScrollTrack>
    <Heading $h={16}>
      <Cell $w={105} $color={C.white} $bold>買盤</Cell>
      <Cell $w={20} $color={C.white} $bold>賣盤</Cell>
    </Heading>
    <Ratio>93.90%<i /></Ratio>
    <Quote>
      <QuoteSide $bg="#17233f"><span>NSDQ</span><b>266.270</b><span>200</span></QuoteSide>
      <QuoteSide $bg="#3a2415"><span>NSDQ</span><b>266.470</b></QuoteSide>
    </Quote>
    <Heading $h={17.8}>
      <Cell $w={33.5} $color={C.white} $bold>深度擺盤</Cell>
      <Info />
    </Heading>
    {book.map((b, i) => (
      <BookRow key={i} $bid={b.bid} $ask={b.ask} $bidLine={b.bl} $askLine={b.al}>
        <BookSide>
          <Cell $w={25.8} $color="#b4bac5">{b.ex}</Cell>
          <BookPrice>{b.p}</BookPrice>
          <BookQty $w={b.qw} $bg={b.qbg}>{b.q}</BookQty>
        </BookSide>
        <BookSide>{b.askEx}</BookSide>
      </BookRow>
    ))}
  </Panel>
);

export default function App() {
  return (
    <Window>
      <Global />
      <TitleBar>
        <Logo />
        <Title>富途牛牛 - 自選</Title>
        <TitleIcons>
          <Headphones size={10} color="#7d828a" strokeWidth={2} />
          <Lock />
          <Shirt size={10.5} color="#7d828a" strokeWidth={2} />
          <Divider />
        </TitleIcons>
      </TitleBar>
      <Body>
        <ChartSide>
          <PeriodBar />
          <DrawBar />
          <MaLegend />
          <ChartArea />
        </ChartSide>
        <QuotePanel />
      </Body>
    </Window>
  );
}
